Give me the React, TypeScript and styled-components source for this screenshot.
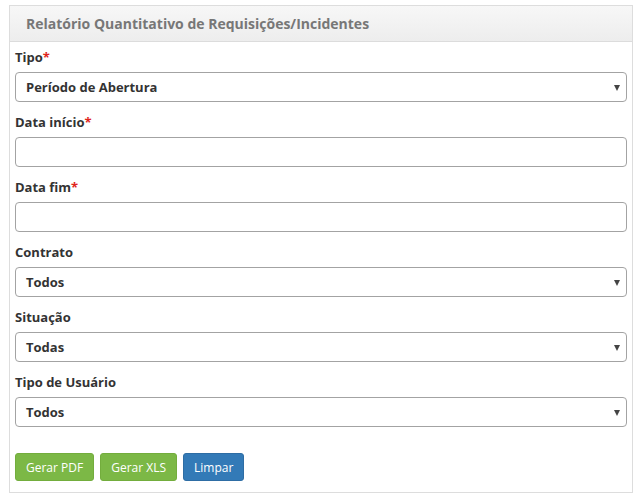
import React from "react";
import styled, { createGlobalStyle } from "styled-components";

const Global = createGlobalStyle`
  html, body { margin: 0; padding: 0; background: #fff; }
  body { font-family: "Open Sans", "Liberation Sans", sans-serif; color: #333; }
  * { box-sizing: border-box; }
`;

const Page = styled.div`
  padding: 5px 8px 0 9px;
`;

const Panel = styled.section`
  width: 624px;
  border: 1px solid #dddddd;
  background: #fff;
`;

const Header = styled.header`
  height: 36px;
  background: linear-gradient(#f7f7f7, #ededed);
  border-bottom: 1px solid #dcdcdc;
  display: flex;
  align-items: center;
  padding-left: 16px;
  font-size: 14px;
  font-weight: 700;
  color: #777;
`;

const Body = styled.div`
  padding: 5px 5px 11px 5px;
`;

const Field = styled.div`
  display: flex;
  flex-direction: column;
  margin-bottom: 10px;
`;

const Label = styled.label`
  height: 20px;
  line-height: 20px;
  font-size: 13px;
  font-weight: 700;
  color: #333;
  margin-bottom: 5px;
`;

const Req = styled.span`
  color: #e0241c;
`;

const Box = styled.div`
  position: relative;
  height: 30px;
  border: 1px solid #a3a3a3;
  border-radius: 4px;
  display: flex;
  align-items: center;
  padding-left: 10px;
  font-size: 13px;
  font-weight: 700;
  color: #333;
  background: #fff;
`;

const Arrow = styled.span`
  position: absolute;
  right: 6px;
  top: 12px;
  width: 0;
  height: 0;
  border-left: 3px solid transparent;
  border-right: 3px solid transparent;
  border-top: 6px solid #444;
`;

const Buttons = styled.div`
  display: flex;
  gap: 6px;
  margin-top: 26px;
`;

const Button = styled.button<{ $tone: "green" | "blue" }>`
  height: 28px;
  padding: 0 10px;
  border: 1px solid ${(p) => (p.$tone === "green" ? "#73ad3d" : "#2e6da4")};
  border-radius: 3px;
  background: ${(p) => (p.$tone === "green" ? "#7cb846" : "#337ab7")};
  color: #fff;
  font-family: "Open Sans", "Liberation Sans", sans-serif;
  font-size: 12px;
  font-weight: 400;
`;

const fields: { label: string; req?: boolean; value?: string; select?: boolean }[] = [
  { label: "Tipo", req: true, value: "Período de Abertura", select: true },
  { label: "Data início", req: true },
  { label: "Data fim", req: true },
  { label: "Contrato", value: "Todos", select: true },
  { label: "Situação", value: "Todas", select: true },
  { label: "Tipo de Usuário", value: "Todos", select: true },
];

export default function App() {
  return (
    <Page>
      <Global />
      <Panel>
        <Header>Relatório Quantitativo de Requisições/Incidentes</Header>
        <Body>
          {fields.map((f) => (
            <Field key={f.label}>
              <Label>
                {f.label}
                {f.req && <Req>*</Req>}
              </Label>
              <Box>
                {f.value}
                {f.select && <Arrow />}
              </Box>
            </Field>
          ))}
          <Buttons>
            <Button $tone="green">Gerar PDF</Button>
            <Button $tone="green">Gerar XLS</Button>
            <Button $tone="blue">Limpar</Button>
          </Buttons>
        </Body>
      </Panel>
    </Page>
  );
}
